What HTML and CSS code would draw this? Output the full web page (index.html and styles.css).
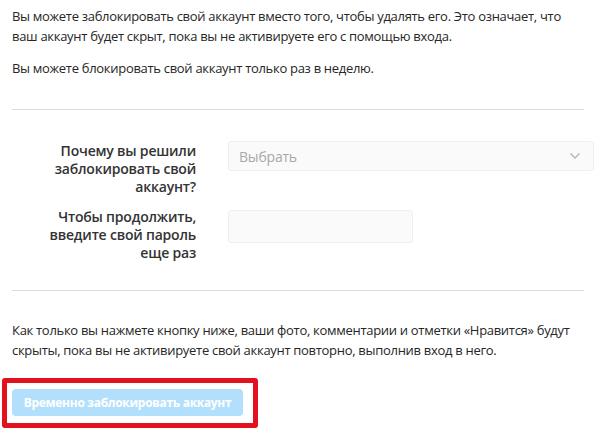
FILE: index.html
```html
<!DOCTYPE html>
<html lang="ru">
<head>
    <meta charset="UTF-8">
    <title>Временно заблокировать аккаунт</title>
    <link rel="stylesheet" href="styles.css">
</head>
<body>
    <main class="content">
        <!-- описание -->
        <section class="intro">
            <p>Вы можете заблокировать свой аккаунт вместо того, чтобы удалять его. Это означает, что ваш аккаунт будет скрыт, пока вы не активируете его с помощью входа.</p>
            <p>Вы можете блокировать свой аккаунт только раз в неделю.</p>
        </section>

        <!-- форма -->
        <section class="form">
            <div class="row">
                <label class="label" for="reason">Почему вы решили заблокировать свой аккаунт?</label>
                <div class="select" id="reason">
                    <span>Выбрать</span>
                    <svg width="12" height="8" viewBox="0 0 12 8"><path d="M1.5 1.5 L6 6 L10.5 1.5" fill="none" stroke="#b5b5b5" stroke-width="1.4"/></svg>
                </div>
            </div>
            <div class="row">
                <label class="label" for="password">Чтобы продолжить, введите свой пароль еще раз</label>
                <input class="input" type="password" id="password">
            </div>
        </section>

        <!-- подтверждение -->
        <section class="confirm">
            <p>Как только вы нажмете кнопку ниже, ваши фото, комментарии и отметки «Нравится» будут скрыты, пока вы не активируете свой аккаунт повторно, выполнив вход в него.</p>
            <div class="highlight">
                <button class="btn" disabled>Временно заблокировать аккаунт</button>
            </div>
        </section>
    </main>
</body>
</html>
```

FILE: styles.css
```css
body {
    font-family: "Open Sans", "Noto Sans", sans-serif;
    margin: 0;
    padding: 0;
    background: #fff;
    color: #262626;
}

.content {
    padding: 6px 16px 0 12px;
}

p {
    margin: 0;
    font-size: 13px;
    line-height: 20px;
    letter-spacing: -0.3px;
}

.intro p + p {
    margin-top: 12px;
}

.intro {
    padding-bottom: 31px;
    border-bottom: 1px solid #dbdbdb;
}

/* форма */
.form {
    padding: 32px 0 28px;
    border-bottom: 1px solid #dbdbdb;
}

.row {
    display: flex;
    align-items: flex-start;
    gap: 32px;
}

.row + .row {
    margin-top: 12px;
}

.label {
    width: 154px;
    padding-left: 30px;
    text-align: right;
    font-weight: 600;
    font-size: 14px;
    line-height: 18px;
    letter-spacing: -0.2px;
    color: #333;
}

.select {
    flex: 1;
    height: 30px;
    margin-top: -1px;
    margin-right: -10px;
    border: 1px solid #efefef;
    border-radius: 3px;
    background: #fafafa;
    box-sizing: border-box;
    display: flex;
    align-items: center;
    justify-content: space-between;
    padding: 0 12px 0 10px;
    font-size: 14px;
    letter-spacing: -0.2px;
    color: #a8a8a8;
}

.input {
    width: 185px;
    height: 33px;
    margin-top: 2px;
    border: 1px solid #efefef;
    border-radius: 3px;
    background: #fafafa;
    box-sizing: border-box;
}

/* подтверждение */
.confirm {
    padding-top: 29px;
}

.highlight {
    display: inline-block;
    margin: 18px 0 0 -10px;
    border: 5px solid #e3101e;
    border-radius: 3px;
    padding: 6px 10px 7px 5px;
}

.btn {
    display: block;
    width: 231px;
    height: 27px;
    border: none;
    border-radius: 4px;
    background: #b2dffc;
    color: #fff;
    font-family: "Open Sans", "Noto Sans", sans-serif;
    font-weight: 700;
    font-size: 12px;
    letter-spacing: -0.3px;
    padding: 0;
}
```
